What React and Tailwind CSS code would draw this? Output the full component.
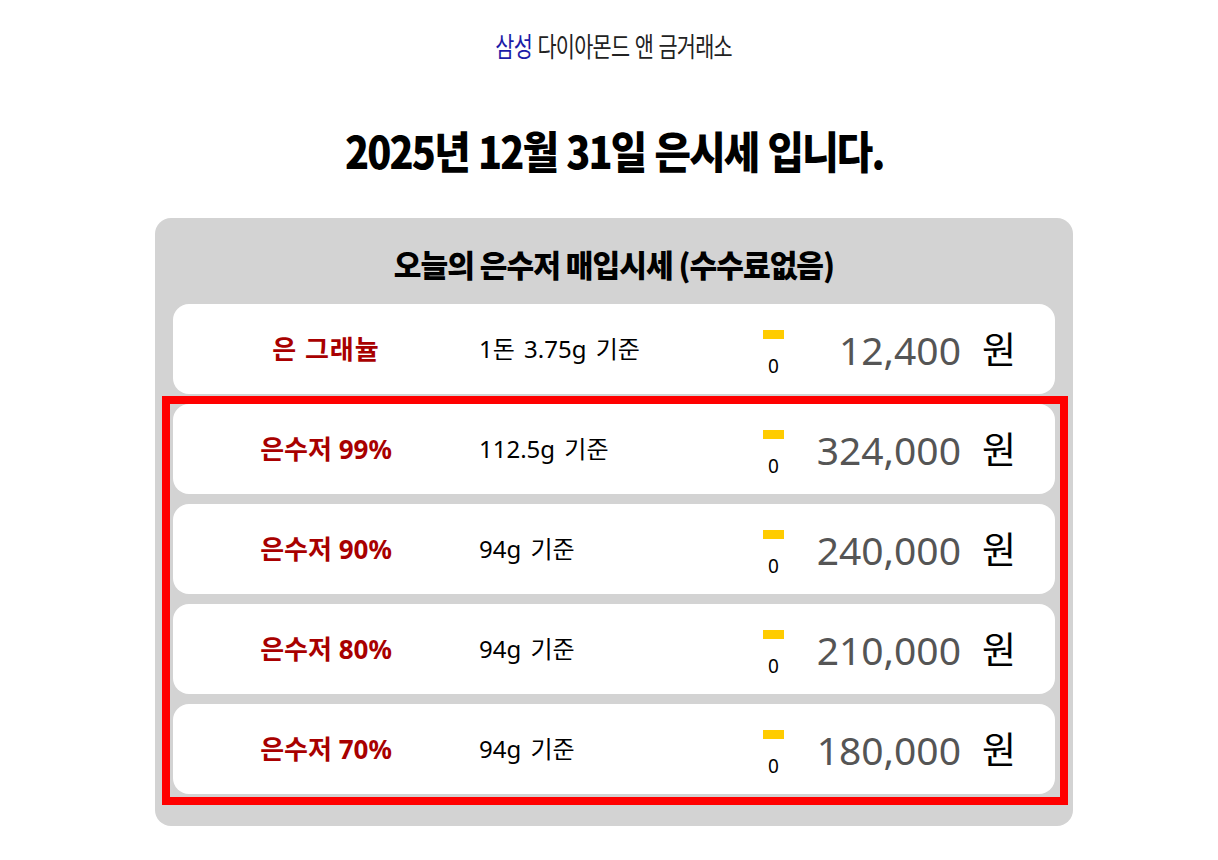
import React from "react";

const rows = [
  { name: "은 그래뉼", basis: "1돈 3.75g 기준", change: "0", price: "12,400", nameCls: "tracking-[1px]" },
  { name: "은수저 99%", basis: "112.5g 기준", change: "0", price: "324,000", nameCls: "" },
  { name: "은수저 90%", basis: "94g 기준", change: "0", price: "240,000", nameCls: "" },
  { name: "은수저 80%", basis: "94g 기준", change: "0", price: "210,000", nameCls: "" },
  { name: "은수저 70%", basis: "94g 기준", change: "0", price: "180,000", nameCls: "" },
];

const rowFont = { fontFamily: '"Noto Sans", "Noto Sans CJK KR", sans-serif' };

function Row({ r }) {
  return (
    <div className="flex h-[90px] items-center rounded-2xl bg-white" style={rowFont}>
      <div className={"w-[306px] text-center text-[26px] font-bold text-[#a80000] " + r.nameCls}>{r.name}</div>
      <div className="w-[284px] text-[24px] text-black [word-spacing:3px]">{r.basis}</div>
      <div className="flex w-[21px] flex-col items-center self-stretch pt-[26px]">
        <div className="h-[9px] w-[21px] bg-[#ffcc00]" />
        <div className="mt-[18px] text-[19px] leading-none text-black">{r.change}</div>
      </div>
      <div className="flex-1 text-right text-[39px] leading-none text-[#555555]">{r.price}</div>
      <div className="ml-[21px] mr-[39px] text-[37px] leading-none text-black">원</div>
    </div>
  );
}

export default function App() {
  const cjk = { fontFamily: '"Noto Sans CJK KR", sans-serif' };
  return (
    <div className="flex min-h-[860px] w-full flex-col items-center bg-white pl-[10px]" style={cjk}>
      <div className="mt-[26px] flex h-[40px] items-center">
        <span className="inline-block scale-x-[0.77] text-[27px] tracking-[-1px] text-[#222] [word-spacing:2px]">
          <span className="text-[#1c1ca8]">삼성</span> 다이아몬드 앤 금거래소
        </span>
      </div>
      <div className="mt-[54px] flex h-[60px] items-center">
        <span className="inline-block scale-x-[0.9] text-[44px] font-black tracking-[-2px] text-black [word-spacing:2px]">
          2025년 12월 31일 은시세 입니다.
        </span>
      </div>
      <div className="mt-[38px] w-[918px] rounded-2xl bg-[#d3d3d3] px-[18px] pt-[22px] pb-[32px]">
        <div className="flex h-[48px] items-center justify-center">
          <span className="inline-block scale-x-[0.97] text-[31px] font-black tracking-[-1px] text-black">
            오늘의 은수저 매입시세 (수수료없음)
          </span>
        </div>
        <div className="mt-[16px] flex flex-col gap-[10px]">
          <Row r={rows[0]} />
          <div className="relative flex flex-col gap-[10px]">
            {rows.slice(1).map((r) => (
              <Row key={r.name} r={r} />
            ))}
            <div className="pointer-events-none absolute -top-[8px] -right-[13px] -bottom-[11px] -left-[11px] border-[8px] border-[#ff0000]" />
          </div>
        </div>
      </div>
    </div>
  );
}
